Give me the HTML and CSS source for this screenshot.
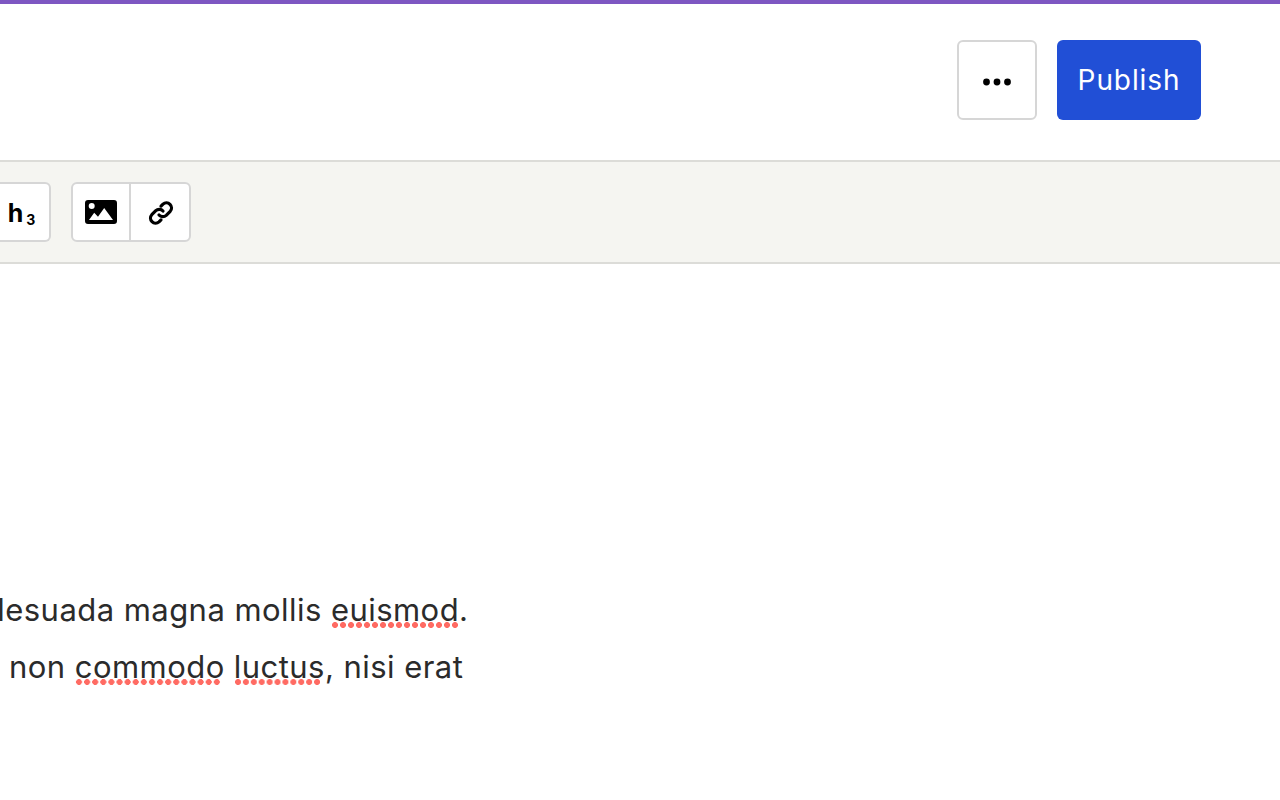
FILE: index.html
```html
<!DOCTYPE html>
<html lang="en">
<head>
<meta charset="utf-8">
<title>Editor</title>
<link rel="stylesheet" href="styles.css">
</head>
<body>
<div class="accent"></div>
<header class="header">
  <button class="more" aria-label="More">
    <svg width="28" height="8" viewBox="0 0 28 8"><circle cx="3.500" cy="4" r="3.400"/><circle cx="14" cy="4" r="3.400"/><circle cx="24.500" cy="4" r="3.400"/></svg>
  </button>
  <button class="publish">Publish</button>
</header>
<div class="toolbar">
  <div class="group group-clipped">
    <button class="tool heading">h<sub>3</sub></button>
  </div>
  <div class="group">
    <button class="tool tool-image">
      <svg width="32" height="24" viewBox="0 0 32 24"><path fill-rule="evenodd" d="M3 0h26a3 3 0 0 1 3 3v18a3 3 0 0 1-3 3H3a3 3 0 0 1-3-3V3a3 3 0 0 1 3-3zM6.700 3a3 3 0 1 0 0 6 3 3 0 0 0 0-6zM4 20h24l-8.800-12-6.200 8.700-3.800-4z"/></svg>
    </button>
    <button class="tool tool-link">
      <svg width="26" height="26" viewBox="0 0 26 26" fill="none" stroke="#000" stroke-width="3.200" stroke-linecap="round" stroke-linejoin="round"><path d="M11 15a5 5 0 0 0 7.200.3l4-4a5.100 5.100 0 0 0-7.200-7.200l-2 2"/><path d="M15 11a5 5 0 0 0-7.200-.3l-4 4a5.100 5.100 0 0 0 7.200 7.200l2-2"/></svg>
    </button>
  </div>
</div>
<main class="content">
  <p class="line line-one">Malesuada magna mollis <span class="typo">euismod</span>.</p>
  <p class="line line-two">non <span class="typo typo-short">commodo</span> <span class="typo typo-short">luctus</span>, nisi erat</p>
</main>
</body>
</html>
```
FILE: styles.css
```css
* { box-sizing: border-box; }
html, body { margin: 0; padding: 0; width: 1280px; height: 800px; overflow: hidden; background: #fff; }
body { font-family: Inter, "Noto Sans", sans-serif; color: #000; }
button { font-family: inherit; margin: 0; cursor: pointer; }
.accent { height: 4px; background: #7e57c2; }
.header { height: 156px; display: flex; justify-content: flex-end; align-items: center; gap: 20px; padding: 0 79px 4px 0; background: #fff; }
.more { width: 80px; height: 80px; padding: 3px 0 0; background: #fff; border: 2px solid #d6d6d6; border-radius: 6px; display: flex; align-items: center; justify-content: center; }
.publish { width: 144px; height: 80px; padding: 0; border: 0; border-radius: 6px; background: #214fd6; color: #fff; font-size: 28px; letter-spacing: 0.9px; }
.toolbar { height: 104px; display: flex; align-items: center; gap: 20px; border-top: 2px solid #dcdcd8; border-bottom: 2px solid #dcdcd8; background: #f5f5f1; }
.group { display: flex; height: 60px; background: #fff; border: 2px solid #d6d6d6; border-radius: 6px; }
.group-clipped { margin-left: -9px; border-left: 0; border-radius: 0 6px 6px 0; }
.tool { width: 60px; padding: 0; background: transparent; border: 0; display: flex; align-items: center; justify-content: center; }
.tool-image { width: 56px; }
.tool-link { padding: 2px 0 0 2px; }
.tool + .tool { border-left: 2px solid #d6d6d6; }
.heading { width: 58px; font-size: 25px; font-weight: 700; color: #000; padding: 2px 0 0 3px; }
.heading sub { font-size: 14px; line-height: 1; margin-left: 3px; position: relative; top: 7px; vertical-align: baseline; }
.content { padding-top: 318px; font-size: 31px; line-height: 56px; letter-spacing: 0.45px; color: #2b2b2b; }
.line { margin: 0; white-space: nowrap; }
.line-one { margin-left: -49px; }
.line-two { padding-left: 9px; padding-top: 1px; }
.typo { position: relative; display: inline-block; }
.typo::after { content: ""; position: absolute; left: 0; right: 0; bottom: 10px; height: 6px; background: radial-gradient(circle at 4px 3px, #ff6b63 2.700px, transparent 3.200px) 0 0 / 8px 6px round; }
.typo-short::after { right: 4px; }
```
